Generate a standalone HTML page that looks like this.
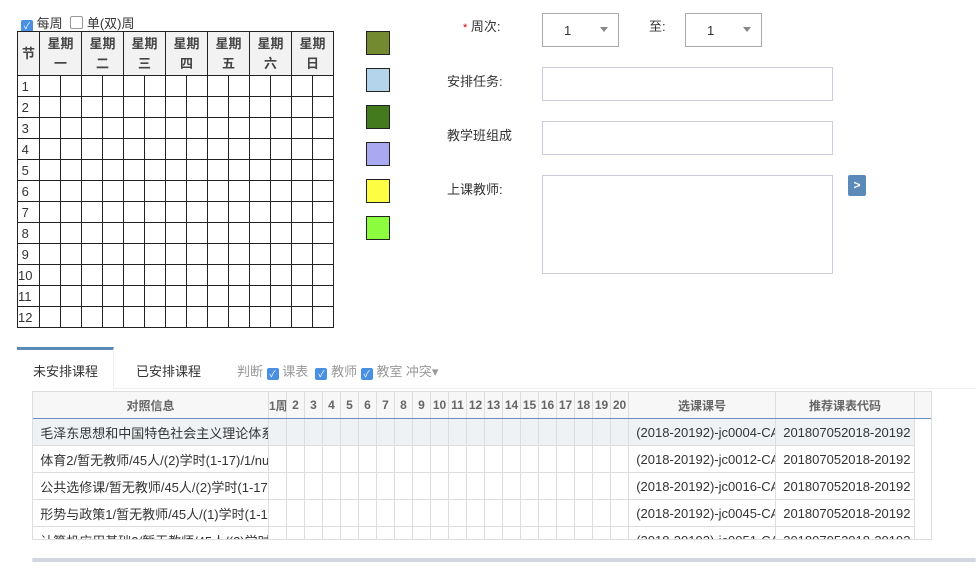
<!DOCTYPE html>
<html><head><meta charset="utf-8"><style>
body{margin:0;width:976px;height:570px;background:#fff;font-family:"Liberation Sans","Noto Sans CJK SC",sans-serif;font-size:13px;color:#333;position:relative;overflow:hidden}
.a{position:absolute}
.cb{display:inline-block;width:12px;height:12px;border-radius:2px;vertical-align:-1px;background:#4a90e2;color:#fff;font-size:9px;line-height:12px;text-align:center}
.cbo{display:inline-block;width:11px;height:11px;border:1px solid #999;border-radius:2px;vertical-align:-1px;background:#fff}
table{border-collapse:collapse}
.g td{border:1px solid #222;width:20px;height:20px;padding:0;font-size:13px}
.g th{border:1px solid #222;background:#f2f2f2;font-weight:bold;font-size:13px;padding:0;height:43px;line-height:20px;color:#444}
.sq{position:absolute;left:366px;width:22px;height:22px;border:1px solid #222}
.lbl{position:absolute;font-size:13px;color:#333}
.box{position:absolute;border:1px solid #ccd;background:#fff}
.sel{position:absolute;border:1px solid #aaa;width:75px;height:32px;background:#fff}
.sel span{position:absolute;left:21px;top:9px}
.sel i{position:absolute;right:10px;top:13px;border-left:4px solid transparent;border-right:4px solid transparent;border-top:5px solid #888}
.t td,.t th{border:1px solid #ddd;padding:0;height:26px;white-space:nowrap;overflow:hidden}
.t th{background:#f7f7f7;color:#666;font-weight:bold;font-size:12px;border-bottom:1px solid #6b8fc4}
</style></head><body>
<div class="a" style="left:21px;top:13px"><span class="cb">✓</span> 每周 <span class="cbo" style="margin-left:4px"></span> 单(双)周</div>
<table class="g a" style="left:17px;top:31px">
<tr><th style="width:21px">节</th><th colspan=2>星期<br>一</th><th colspan=2>星期<br>二</th><th colspan=2>星期<br>三</th><th colspan=2>星期<br>四</th><th colspan=2>星期<br>五</th><th colspan=2>星期<br>六</th><th colspan=2>星期<br>日</th></tr>
<tr><td>&nbsp;1</td><td></td><td></td><td></td><td></td><td></td><td></td><td></td><td></td><td></td><td></td><td></td><td></td><td></td><td></td></tr>
<tr><td>&nbsp;2</td><td></td><td></td><td></td><td></td><td></td><td></td><td></td><td></td><td></td><td></td><td></td><td></td><td></td><td></td></tr>
<tr><td>&nbsp;3</td><td></td><td></td><td></td><td></td><td></td><td></td><td></td><td></td><td></td><td></td><td></td><td></td><td></td><td></td></tr>
<tr><td>&nbsp;4</td><td></td><td></td><td></td><td></td><td></td><td></td><td></td><td></td><td></td><td></td><td></td><td></td><td></td><td></td></tr>
<tr><td>&nbsp;5</td><td></td><td></td><td></td><td></td><td></td><td></td><td></td><td></td><td></td><td></td><td></td><td></td><td></td><td></td></tr>
<tr><td>&nbsp;6</td><td></td><td></td><td></td><td></td><td></td><td></td><td></td><td></td><td></td><td></td><td></td><td></td><td></td><td></td></tr>
<tr><td>&nbsp;7</td><td></td><td></td><td></td><td></td><td></td><td></td><td></td><td></td><td></td><td></td><td></td><td></td><td></td><td></td></tr>
<tr><td>&nbsp;8</td><td></td><td></td><td></td><td></td><td></td><td></td><td></td><td></td><td></td><td></td><td></td><td></td><td></td><td></td></tr>
<tr><td>&nbsp;9</td><td></td><td></td><td></td><td></td><td></td><td></td><td></td><td></td><td></td><td></td><td></td><td></td><td></td><td></td></tr>
<tr><td>10</td><td></td><td></td><td></td><td></td><td></td><td></td><td></td><td></td><td></td><td></td><td></td><td></td><td></td><td></td></tr>
<tr><td>11</td><td></td><td></td><td></td><td></td><td></td><td></td><td></td><td></td><td></td><td></td><td></td><td></td><td></td><td></td></tr>
<tr><td>12</td><td></td><td></td><td></td><td></td><td></td><td></td><td></td><td></td><td></td><td></td><td></td><td></td><td></td><td></td></tr>
</table>
<div class="sq" style="top:31px;background:#738a30"></div>
<div class="sq" style="top:68px;background:#b3d4ea"></div>
<div class="sq" style="top:105px;background:#447a1e"></div>
<div class="sq" style="top:142px;background:#aaa8f0"></div>
<div class="sq" style="top:179px;background:#fdfd44"></div>
<div class="sq" style="top:216px;background:#8bfd3e"></div>
<div class="lbl" style="left:463px;top:16px"><span style="color:#d00;font-size:11px">*</span> 周次:</div>
<div class="sel" style="left:542px;top:13px"><span>1</span><i></i></div>
<div class="lbl" style="left:649px;top:16px">至:</div>
<div class="sel" style="left:685px;top:13px"><span>1</span><i></i></div>
<div class="lbl" style="left:447px;top:71px">安排任务:</div>
<div class="box" style="left:542px;top:67px;width:289px;height:32px"></div>
<div class="lbl" style="left:447px;top:125px">教学班组成</div>
<div class="box" style="left:542px;top:121px;width:289px;height:32px"></div>
<div class="lbl" style="left:447px;top:179px">上课教师:</div>
<div class="box" style="left:542px;top:175px;width:289px;height:97px"></div>
<div class="a" style="left:848px;top:175px;width:18px;height:21px;background:#5b8ab8;border-radius:2px;color:#fff;font-weight:bold;font-size:12px;text-align:center;line-height:21px">&gt;</div>
<div class="a" style="left:17px;top:347px;width:97px;height:42px;border-top:3px solid #5b8ab8;border-right:1px solid #eee;box-sizing:border-box"></div>
<div class="a" style="left:114px;top:388px;width:862px;border-top:1px solid #eee"></div>
<div class="a" style="left:33px;top:361px">未安排课程</div>
<div class="a" style="left:136px;top:361px">已安排课程</div>
<div class="a" style="left:237px;top:361px;color:#999">判断 <span class="cb">✓</span> 课表 &nbsp;<span class="cb">✓</span> 教师 <span class="cb">✓</span> 教室 冲突▾</div>
<div class="a" style="left:32px;top:391px;width:900px;height:149px;overflow:hidden;border:1px solid #ddd;border-top:0;box-sizing:border-box">
<table class="t" style="table-layout:fixed;width:901px;margin-left:-1px">
<colgroup><col style="width:236px"><col span=20 style="width:18px"><col style="width:147px"><col style="width:139px"><col style="width:19px"></colgroup>
<tr><th>对照信息</th><th>1周</th><th>2</th><th>3</th><th>4</th><th>5</th><th>6</th><th>7</th><th>8</th><th>9</th><th>10</th><th>11</th><th>12</th><th>13</th><th>14</th><th>15</th><th>16</th><th>17</th><th>18</th><th>19</th><th>20</th><th>选课课号</th><th>推荐课表代码</th><th></th></tr>
<tr style="background:#eff2f5"><td>&nbsp;&nbsp;毛泽东思想和中国特色社会主义理论体系</td><td></td><td></td><td></td><td></td><td></td><td></td><td></td><td></td><td></td><td></td><td></td><td></td><td></td><td></td><td></td><td></td><td></td><td></td><td></td><td></td><td>&nbsp;&nbsp;(2018-20192)-jc0004-CA</td><td>&nbsp;&nbsp;201807052018-20192</td><td style="background:#fff;border:0"></td></tr>
<tr><td>&nbsp;&nbsp;体育2/暂无教师/45人/(2)学时(1-17)/1/null</td><td></td><td></td><td></td><td></td><td></td><td></td><td></td><td></td><td></td><td></td><td></td><td></td><td></td><td></td><td></td><td></td><td></td><td></td><td></td><td></td><td>&nbsp;&nbsp;(2018-20192)-jc0012-CA</td><td>&nbsp;&nbsp;201807052018-20192</td><td style="border:0"></td></tr>
<tr><td>&nbsp;&nbsp;公共选修课/暂无教师/45人/(2)学时(1-17)</td><td></td><td></td><td></td><td></td><td></td><td></td><td></td><td></td><td></td><td></td><td></td><td></td><td></td><td></td><td></td><td></td><td></td><td></td><td></td><td></td><td>&nbsp;&nbsp;(2018-20192)-jc0016-CA</td><td>&nbsp;&nbsp;201807052018-20192</td><td style="border:0"></td></tr>
<tr><td>&nbsp;&nbsp;形势与政策1/暂无教师/45人/(1)学时(1-17)</td><td></td><td></td><td></td><td></td><td></td><td></td><td></td><td></td><td></td><td></td><td></td><td></td><td></td><td></td><td></td><td></td><td></td><td></td><td></td><td></td><td>&nbsp;&nbsp;(2018-20192)-jc0045-CA</td><td>&nbsp;&nbsp;201807052018-20192</td><td style="border:0"></td></tr>
<tr><td>&nbsp;&nbsp;计算机应用基础2/暂无教师/45人/(2)学时</td><td></td><td></td><td></td><td></td><td></td><td></td><td></td><td></td><td></td><td></td><td></td><td></td><td></td><td></td><td></td><td></td><td></td><td></td><td></td><td></td><td>&nbsp;&nbsp;(2018-20192)-jc0051-CA</td><td>&nbsp;&nbsp;201807052018-20192</td><td style="border:0"></td></tr>
</table></div>
<div class="a" style="left:32px;top:558px;width:944px;height:4px;background:#d4d6df;border-radius:2px"></div>
</body></html>
